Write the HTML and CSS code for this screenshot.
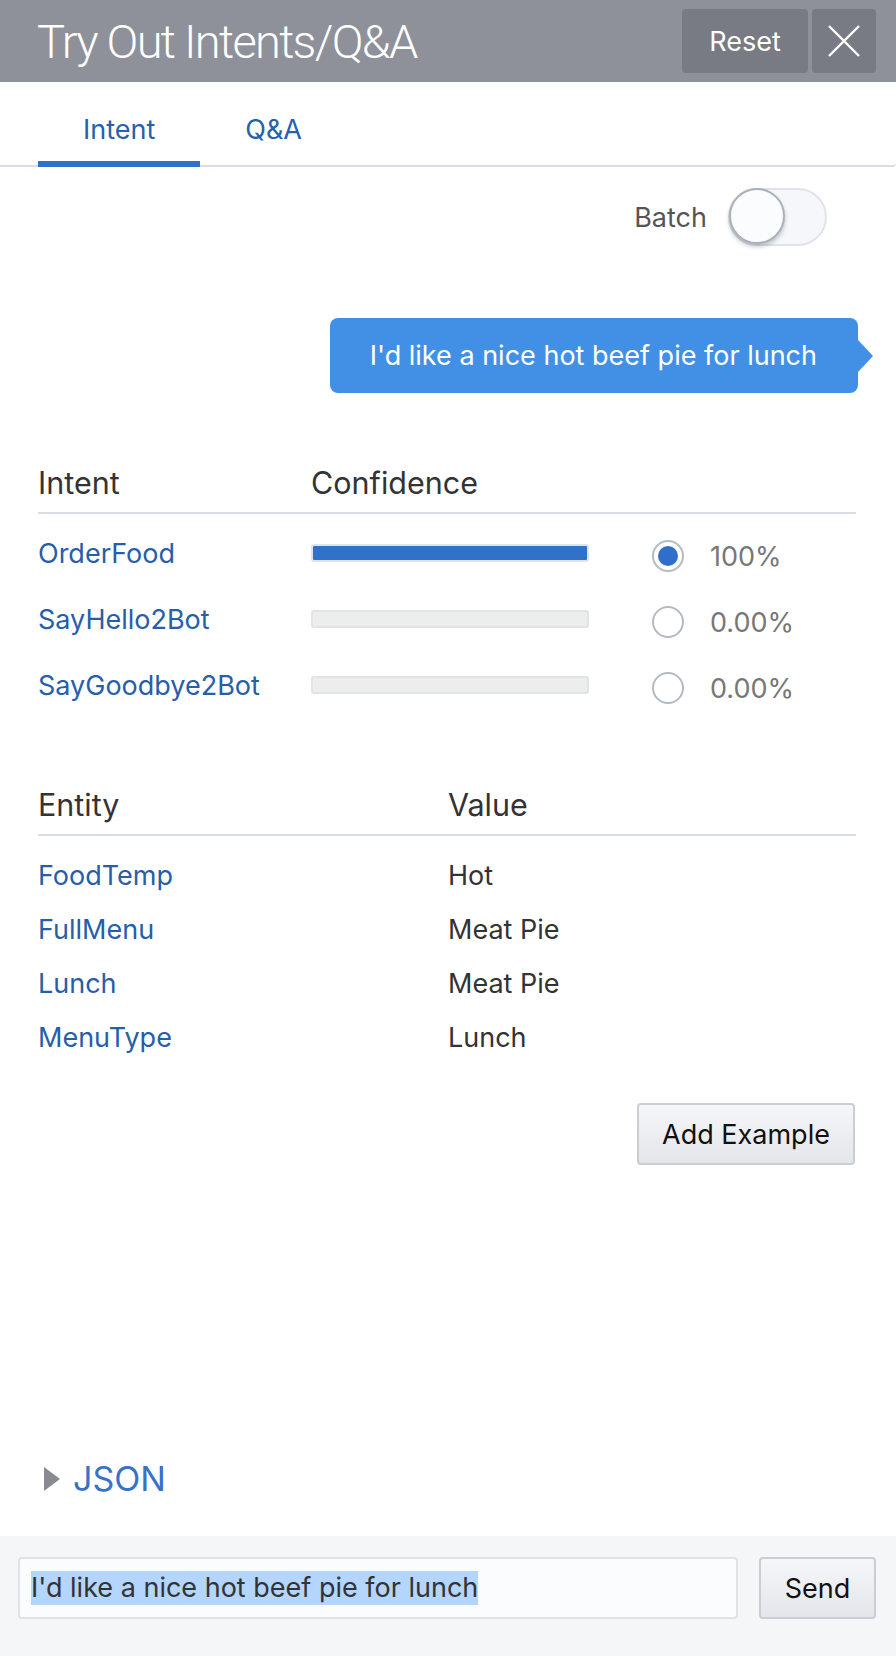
FILE: index.html
```html
<!DOCTYPE html>
<html lang="en">
<head>
<meta charset="utf-8">
<title>Try Out Intents/Q&amp;A</title>
<link rel="stylesheet" href="styles.css">
</head>
<body>
<div class="panel">
  <header class="topbar">
    <h1 class="title">Try Out Intents/Q&amp;A</h1>
    <div class="actions">
      <button class="btn-dark reset">Reset</button>
      <button class="btn-dark close" aria-label="Close">
        <svg width="34" height="32" viewBox="0 0 34 32"><path d="M2 1 L32 31 M32 1 L2 31" stroke="#fff" stroke-width="2.4" fill="none"/></svg>
      </button>
    </div>
  </header>

  <nav class="tabs">
    <a class="tab active">Intent</a>
    <a class="tab">Q&amp;A</a>
  </nav>

  <main class="content">
    <div class="batch-row">
      <span class="batch-label">Batch</span>
      <span class="toggle"><span class="knob"></span></span>
    </div>

    <div class="bubble-row">
      <div class="bubble">I'd like a nice hot beef pie for lunch</div>
    </div>

    <section class="intents">
      <div class="grid-head intent-grid">
        <span>Intent</span>
        <span>Confidence</span>
      </div>
      <div class="intent-rows">
        <div class="intent-row intent-grid">
          <a class="link">OrderFood</a>
          <div class="bar"><div class="bar-fill" style="width:100%"></div></div>
          <div class="score"><span class="radio on"></span><span>100%</span></div>
        </div>
        <div class="intent-row intent-grid">
          <a class="link">SayHello2Bot</a>
          <div class="bar"><div class="bar-fill" style="width:0%"></div></div>
          <div class="score"><span class="radio"></span><span>0.00%</span></div>
        </div>
        <div class="intent-row intent-grid">
          <a class="link">SayGoodbye2Bot</a>
          <div class="bar"><div class="bar-fill" style="width:0%"></div></div>
          <div class="score"><span class="radio"></span><span>0.00%</span></div>
        </div>
      </div>
    </section>

    <section class="entities">
      <div class="grid-head entity-grid">
        <span>Entity</span>
        <span>Value</span>
      </div>
      <div class="entity-rows">
        <div class="entity-row entity-grid"><a class="link">FoodTemp</a><span>Hot</span></div>
        <div class="entity-row entity-grid"><a class="link">FullMenu</a><span>Meat Pie</span></div>
        <div class="entity-row entity-grid"><a class="link">Lunch</a><span>Meat Pie</span></div>
        <div class="entity-row entity-grid"><a class="link">MenuType</a><span>Lunch</span></div>
      </div>
    </section>

    <div class="add-row">
      <button class="btn-light add">Add Example</button>
    </div>

    <div class="json-row">
      <span class="caret"></span>
      <span class="json-label">JSON</span>
    </div>
  </main>

  <footer class="composer">
    <div class="input"><span class="sel">I'd like a nice hot beef pie for lunch</span></div>
    <button class="btn-light send">Send</button>
  </footer>
</div>
</body>
</html>
```

FILE: styles.css
```css
* { box-sizing: border-box; margin: 0; padding: 0; }

html, body { width: 896px; height: 1656px; }

body {
  font-family: Inter, "Noto Sans", sans-serif;
  color: #333;
  background: #fff;
}

.panel {
  display: flex;
  flex-direction: column;
  height: 1656px;
}

/* Top bar */
.topbar {
  height: 82px;
  background: #8e9199;
  display: flex;
  align-items: center;
  padding: 0 20px 0 37px;
}

.title {
  flex: 1;
  font-family: Roboto, "Liberation Sans", sans-serif;
  font-weight: 300;
  font-size: 47px;
  letter-spacing: -1.7px;
  line-height: 1;
  color: #fff;
}

.actions { display: flex; gap: 4px; }

.btn-dark {
  height: 64px;
  border: none;
  border-radius: 4px;
  background: #787b83;
  color: #fff;
  font-family: Inter, "Noto Sans", sans-serif;
  font-size: 27px;
}

.reset { width: 126px; }

.close {
  width: 64px;
  display: flex;
  align-items: center;
  justify-content: center;
}

/* Tabs */
.tabs {
  display: flex;
  height: 85px;
  padding-left: 38px;
  border-bottom: 2px solid #d8dde6;
  border-bottom-right-radius: 4px;
}

.tab {
  padding: 30px 45px 13px;
  line-height: 36px;
  font-size: 27px;
  color: #2461ae;
  border-bottom: 6px solid transparent;
  margin-bottom: -2px;
}

.tab.active { border-bottom-color: #3172c9; }

/* Content */
.content {
  flex: 1;
  display: flex;
  flex-direction: column;
  padding: 0 40px 0 38px;
}

.batch-row {
  display: flex;
  justify-content: flex-end;
  align-items: center;
  gap: 21px;
  margin-top: 21px;
  padding-right: 29px;
}

.batch-label {
  font-size: 27px;
  color: #555;
}

.toggle {
  width: 99px;
  height: 58px;
  border: 2px solid #e0e4e9;
  border-radius: 29px;
  background: #f5f7fa;
  display: flex;
  align-items: center;
}

.knob {
  width: 56px;
  height: 56px;
  margin-left: -1px;
  margin-top: -3px;
  border-radius: 50%;
  border: 2px solid #a9b1bc;
  background: #fbfcfe;
  box-shadow: 0 3px 4px rgba(0, 0, 0, 0.22);
}

.bubble-row {
  display: flex;
  justify-content: flex-end;
  margin-top: 72px;
  margin-right: -2px;
}

.bubble {
  position: relative;
  height: 75px;
  display: flex;
  align-items: center;
  padding: 0 41px 0 40px;
  background: #4290e6;
  color: #fff;
  font-size: 27px;
  border-radius: 8px;
}

.bubble::after {
  content: "";
  position: absolute;
  right: -15px;
  top: 22px;
  border-left: 15px solid #4290e6;
  border-top: 16px solid transparent;
  border-bottom: 16px solid transparent;
}

/* Tables */
.grid-head {
  display: grid;
  line-height: 36px;
  font-size: 30.5px;
  color: #333;
  padding-bottom: 11px;
  border-bottom: 2px solid #d8dde6;
}

.intents { margin-top: 72px; }

.intent-grid { grid-template-columns: 273px 278px 1fr; }

.intent-rows { padding-top: 6px; }

.intent-row {
  display: grid;
  height: 66px;
  align-items: center;
  font-size: 27px;
}

.link { color: #265eaa; }

.bar {
  height: 18px;
  border: 2px solid #e0e3e7;
  border-radius: 3px;
  background: #ededee;
  overflow: hidden;
}

.bar-fill {
  height: 100%;
  background: #3172c8;
}

.score {
  display: flex;
  align-items: center;
  padding-left: 63px;
  gap: 26px;
  color: #777;
  margin-top: 6px;
}

.radio {
  width: 32px;
  height: 32px;
  border: 2px solid #b4bac3;
  border-radius: 50%;
  background: #fff;
  display: flex;
  align-items: center;
  justify-content: center;
}

.radio.on::before {
  content: "";
  width: 20px;
  height: 20px;
  border-radius: 50%;
  background: #2f6fca;
}

.entities { margin-top: 69px; }

.entity-grid { grid-template-columns: 410px 1fr; }

.entity-rows { padding-top: 12px; }

.entity-row {
  display: grid;
  height: 54px;
  align-items: center;
  font-size: 27px;
}

.add-row {
  display: flex;
  justify-content: flex-end;
  margin-top: 39px;
  margin-right: 1px;
}

.btn-light {
  height: 62px;
  border: 2px solid #c9ced5;
  border-radius: 4px;
  background: linear-gradient(#f5f6f8, #e3e6ea);
  color: #111;
  font-family: Inter, "Noto Sans", sans-serif;
  font-size: 27px;
}

.add { width: 218px; }

.json-row {
  margin-top: auto;
  margin-bottom: 37px;
  display: flex;
  align-items: center;
  gap: 13px;
  padding-left: 6px;
  height: 40px;
}

.caret {
  width: 0;
  height: 0;
  border-left: 16px solid #898b90;
  border-top: 12.5px solid transparent;
  border-bottom: 12.5px solid transparent;
}

.json-label {
  font-size: 34px;
  color: #3572c8;
  line-height: 40px;
}

/* Composer */
.composer {
  height: 120px;
  background: #f5f6f8;
  display: flex;
  align-items: flex-start;
  gap: 21px;
  padding: 21px 20px 0 18px;
}

.input {
  flex: 1;
  height: 62px;
  background: #fbfcfd;
  border: 2px solid #dfe2e6;
  border-radius: 4px;
  display: flex;
  align-items: center;
  padding-left: 11px;
}

.sel {
  background: #b4d5fe;
  line-height: 34px;
  font-size: 27px;
  color: #333;
}

.send { width: 117px; }
```
